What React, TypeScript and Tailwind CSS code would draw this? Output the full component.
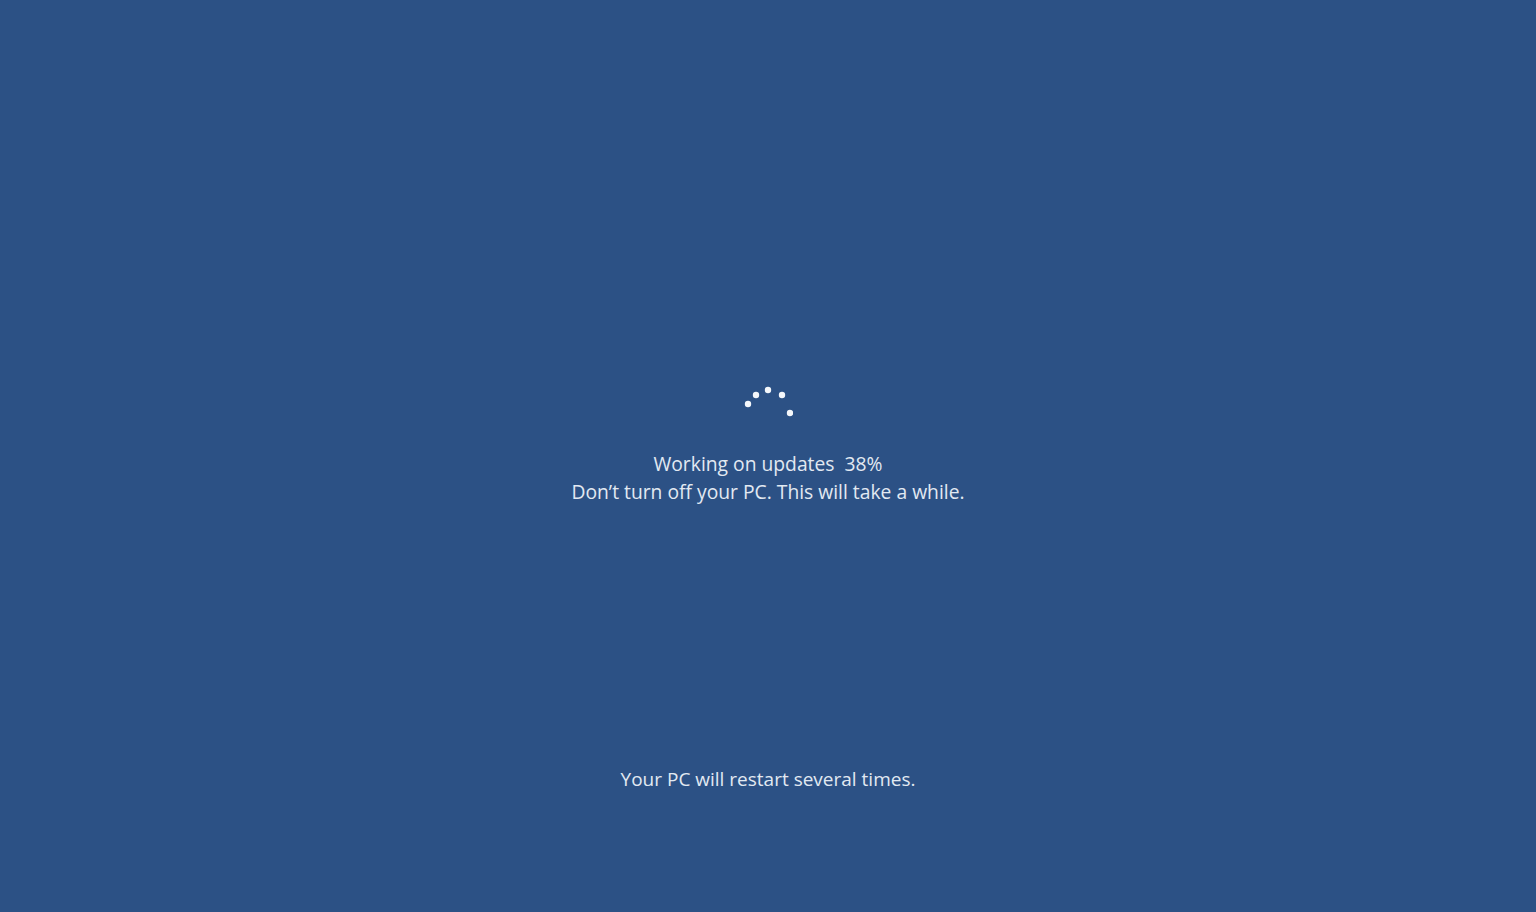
export default function App() {
  const dots = [
    [5, 19],
    [13, 10],
    [25, 5],
    [39, 10],
    [47, 28],
  ];

  return (
    <div
      className="w-full h-[912px] bg-[#2c5185] flex flex-col items-center text-[#e2e9f2]"
      style={{ fontFamily: '"Open Sans", "Noto Sans", sans-serif' }}
    >
      <svg width="50" height="32" viewBox="0 0 50 32" className="mt-[385px]">
        {dots.map(([x, y], i) => (
          <circle key={i} cx={x} cy={y} r="3.2" fill="#f4f7fb" />
        ))}
      </svg>

      <div className="mt-[33px] text-center text-[19.3px] leading-[28px]">
        <p>Working on updates&nbsp;&nbsp;38%</p>
        <p>Don’t turn off your PC. This will take a while.</p>
      </div>

      <p className="mt-[259px] text-center text-[19px] leading-[28px]">
        Your PC will restart several times.
      </p>
    </div>
  );
}
